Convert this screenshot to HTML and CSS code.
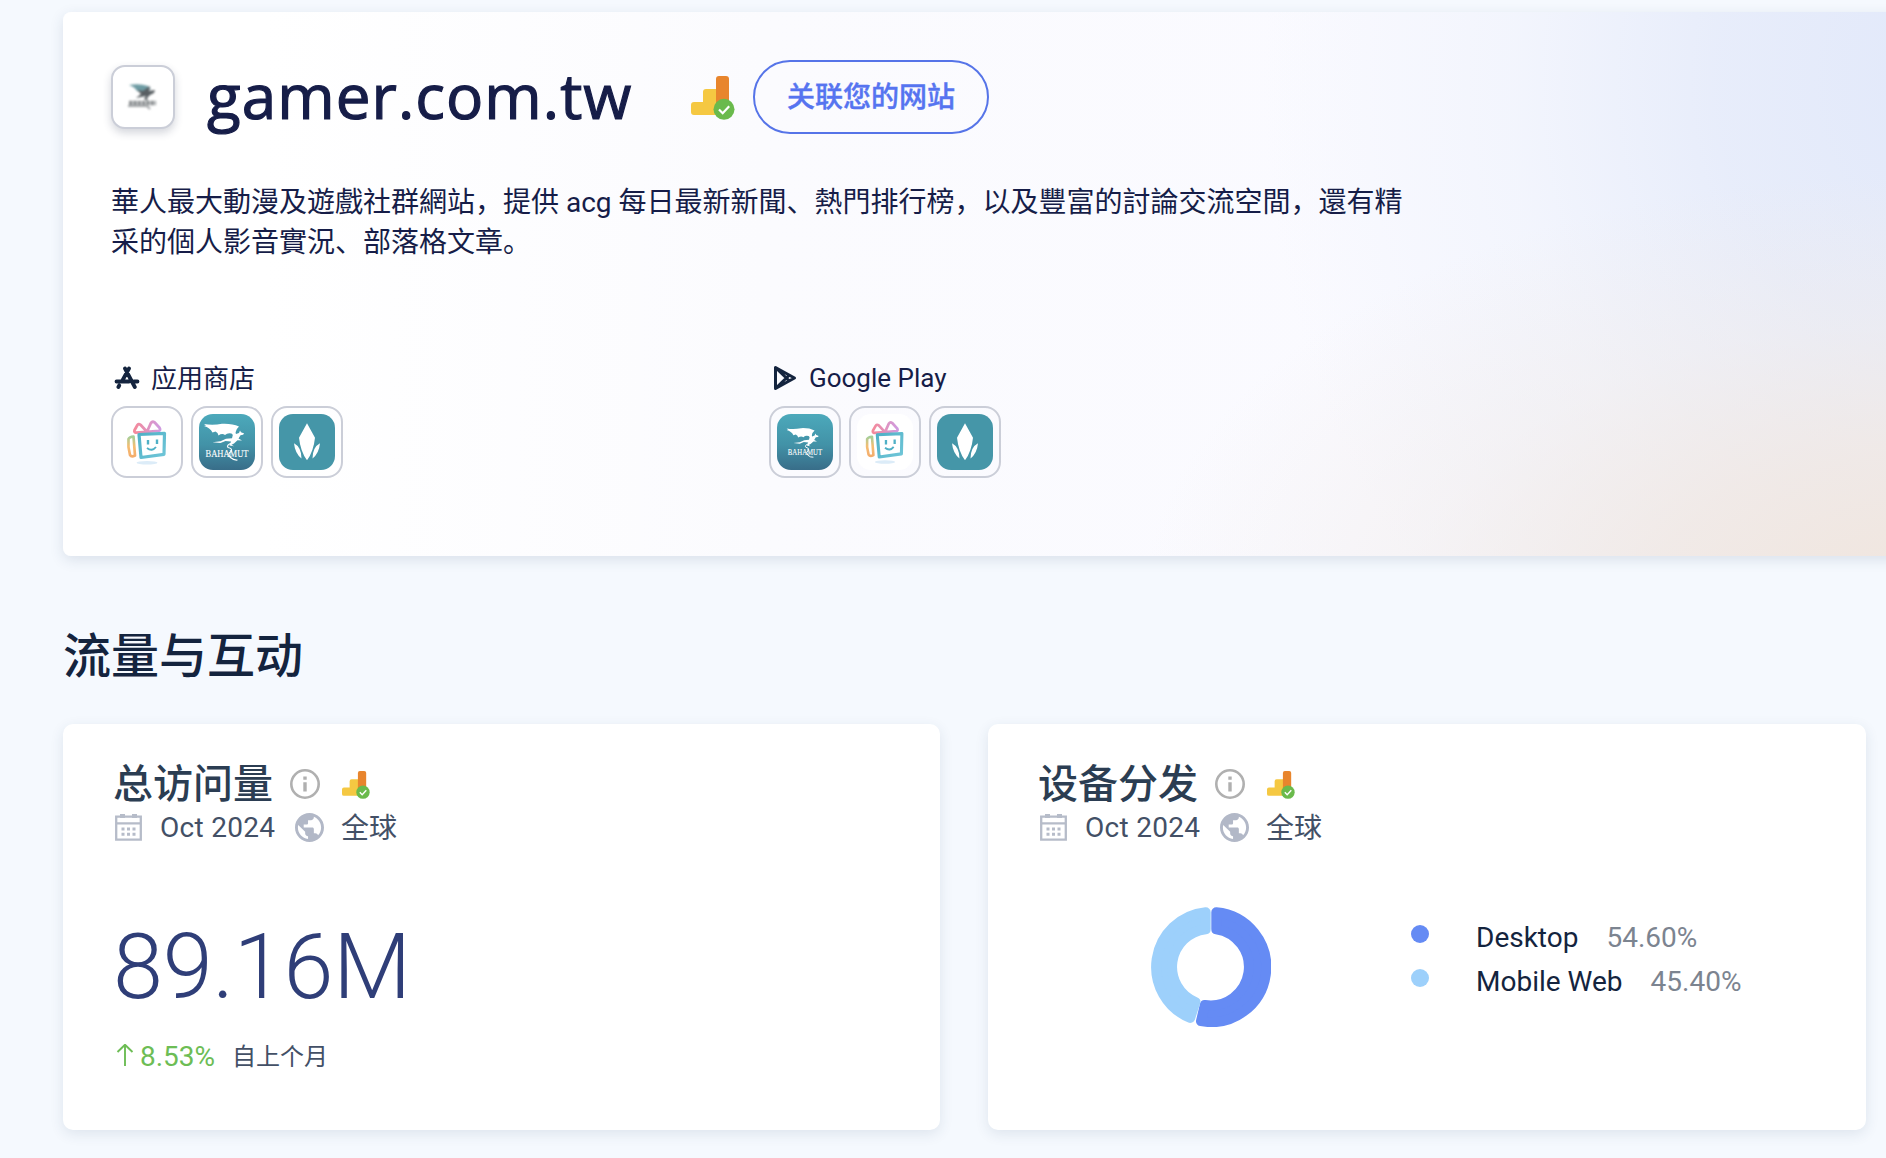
FILE: index.html
```html
<!DOCTYPE html>
<html lang="zh-CN">
<head>
<meta charset="utf-8">
<title>gamer.com.tw</title>
<link rel="stylesheet" href="styles.css">
</head>
<body>
<svg class="defs" width="0" height="0" aria-hidden="true">
  <defs>
    <linearGradient id="bow" x1="0" y1="0" x2="1" y2="0"><stop offset="0" stop-color="#f48a9b"/><stop offset="1" stop-color="#cf9be0"/></linearGradient>
    <linearGradient id="side" x1="0" y1="0" x2="0" y2="1"><stop offset="0" stop-color="#a3cf9a"/><stop offset=".5" stop-color="#f5bd72"/><stop offset="1" stop-color="#f4ad6c"/></linearGradient>
    <linearGradient id="box" x1="0" y1="0" x2="1" y2="1"><stop offset="0" stop-color="#4fb0c6"/><stop offset="1" stop-color="#70c6d8"/></linearGradient>
    <symbol id="ga" viewBox="0 0 44 44">
      <path d="M0 29a3 3 0 0 1 3-3h9V16a3 3 0 0 1 3-3h13v26H3a3 3 0 0 1-3-3z" fill="#f5c842"/>
      <rect x="25" y="0" width="13" height="38" rx="3" fill="#e8852d"/>
      <circle cx="33" cy="33.300" r="10.500" fill="#6aba4c"/>
      <path d="M28 33.500l3.700 3.700 6.500-6.900" fill="none" stroke="#fff" stroke-width="2.200"/>
    </symbol>
    <symbol id="gift" viewBox="0 0 56 56">
      <ellipse cx="28" cy="48.700" rx="10.500" ry="1.800" fill="#dcecf8"/>
      <g fill="none" stroke-linejoin="round">
        <path d="M14.500 22.500q-4 .2-5 2.500-.8 8 1.500 16 1.500 2.500 5 .5z" stroke="url(#side)" stroke-width="2.700"/>
        <path d="M28 17.800l-6.500-7q-2-1.500-3.200.500l-2.800 5q-.5 2 1.200 2.300zM28 17.800l4-9q1.500-2 3.500-.5l5 5.500q1.500 2.500-.8 3z" stroke="url(#bow)" stroke-width="2.800"/>
        <path d="M20 20.500l25.500-1.200-.5 21-23 3.200z" stroke="url(#box)" stroke-width="3.200"/>
        <path d="M28 34q5 4 9-1" stroke="#4fb0c6" stroke-width="1.900"/>
      </g>
      <path d="M29 26v4.500m9-5v4.500" stroke="#4fb0c6" stroke-width="2.400"/>
    </symbol>
    <symbol id="dragon" viewBox="0 0 56 56">
      <path d="M5 10q9 1.500 18-.3 10-.5 17 2.800-3 2.500-3.500 6l-1 4-3-3q-4-1-6.500 1.500-3-2-6.500.5-.5-3-3-4l-3 1q-2.500-5-8.500-6.500l2-.5z" fill="#fff"/>
      <path d="M35 16l2 4 3-1 1-2.500 1 1.800 3.200 1.200-1.200 1.300-2.500.4-2 3.300 3.500 2-4.500-.2-3.500 3.200-2.500 1.300 2.500 1.500-4.500-.7 1.500-4-5.500-.5-5 2-8-.8 8-1 5.500-2.500 6-.5z" fill="#fff"/>
      <path d="M33 29q-6 2-4 4.500 5 1 3 4-4 2.500-.5 6 3.500 3 7 2.500" fill="none" stroke="#fff" stroke-width="1.200"/>
    </symbol>
    <symbol id="leaf" viewBox="0 0 56 56">
      <path d="M28 9.300l8 14.500q-1.500 14-8 22.500-6.500-8.500-8-22.500zM15 29.300q7.500 4 7.500 15.200-6.500-5-7.500-15.200zM41 29.300q-7.500 4-7.500 15.200 6.500-5 7.500-15.200z" fill="#fff"/>
    </symbol>
    <symbol id="info" viewBox="0 0 30 30"><circle cx="15" cy="15" r="13.700" fill="none" stroke="#b0b0b0" stroke-width="2.600"/><path d="M13.300 7.500h3.400v3.200h-3.400zM13.300 13.300h3.400v9.200h-3.400z" fill="#b0b0b0"/></symbol>
    <symbol id="calendar" viewBox="0 0 27 27"><path d="M1.200 2.700h24.600v23H1.200zM1 9.300h25" fill="none" stroke="#b6bcc9" stroke-width="2.300"/><path d="M5 0h5v4H5zM17 0h5v4h-5zM6.500 13.500h3v3h-3zM12 13.500h3v3h-3zM17.500 13.500h3v3h-3zM6.500 18.700h3v3h-3zM12 18.700h3v3h-3zM17.500 18.700h3v3h-3z" fill="#b6bcc9"/></symbol>
    <symbol id="globe" viewBox="2 2 20 20"><path fill="#b2b8c7" d="M12 2C6.480 2 2 6.480 2 12s4.480 10 10 10 10-4.480 10-10S17.520 2 12 2zm-1 17.930c-3.950-.49-7-3.850-7-7.930 0-.62.080-1.210.210-1.790L9 15v1c0 1.100.9 2 2 2v1.930zm6.900-2.540c-.26-.81-1-1.390-1.900-1.390h-1v-3c0-.55-.45-1-1-1H8v-2h2c.55 0 1-.45 1-1V7h2c1.100 0 2-.9 2-2v-.41c2.930 1.190 5 4.060 5 7.410 0 2.080-.8 3.970-2.100 5.390z"/></symbol>
  </defs>
</svg>

<header class="site">
  <div class="site-head">
    <div class="favicon">
      <svg width="32" height="32" viewBox="0 0 32 32"><path d="M2 4q10-2 19 1l3 3-4 2-5 1-5-1q-2-4-8-6z" fill="#6d9ba3"/><path d="M10 9l6 1 7-5-1 5 6-1-1 3-4 2-3 3 1 3-4-2 2-3-5 1-5 1 5-4z" fill="#595f63"/><path d="M2 22h27" stroke="#8b8f91" stroke-width="4.500" stroke-dasharray="3.500 .8"/><path d="M1 25h19l3 3" fill="none" stroke="#a4a7a9" stroke-width="2"/></svg>
    </div>
    <h1>gamer.com.tw</h1>
    <svg class="ga-large"><use href="#ga"/></svg>
    <button class="connect">关联您的网站</button>
  </div>
  <p class="about">華人最大動漫及遊戲社群網站，提供 acg 每日最新新聞、熱門排行榜，以及豐富的討論交流空間，還有精采的個人影音實況、部落格文章。</p>
  <div class="stores">
    <section class="store">
      <h2><svg width="26" height="24" viewBox="0 0 26 24"><g fill="none" stroke="#14243e" stroke-width="3.800" stroke-linecap="round"><path d="M11 2.500l9.800 18.500M15 2.500L8.700 14M2.500 15.500h12.500M20 15.500h3.500M5.200 19.500l-.8 1.500"/></g></svg><span class="cjk">应用商店</span></h2>
      <div class="apps">
        <div class="app"><svg><use href="#gift"/></svg></div>
        <div class="app bahamut"><svg viewBox="0 0 56 56"><use href="#dragon"/><text x="28" y="43" textLength="43" lengthAdjust="spacingAndGlyphs">BAHAMUT</text></svg></div>
        <div class="app leaf"><svg><use href="#leaf"/></svg></div>
      </div>
    </section>
    <section class="store google">
      <h2><svg width="24" height="26" viewBox="0 0 24 26"><path d="M2.500 2.500v21L21.500 13zM3 3l13.500 13M3 23l13.500-13" fill="none" stroke="#14243e" stroke-width="3" stroke-linejoin="round"/></svg><span>Google Play</span></h2>
      <div class="apps">
        <div class="app bahamut"><svg viewBox="-7 -8 70 70"><use href="#dragon" width="56" height="56"/><text x="28" y="43" textLength="43" lengthAdjust="spacingAndGlyphs">BAHAMUT</text></svg></div>
        <div class="app white"><svg viewBox="-1 -1 58 58"><use href="#gift" width="56" height="56"/></svg></div>
        <div class="app leaf"><svg><use href="#leaf"/></svg></div>
      </div>
    </section>
  </div>
</header>

<h2 class="section-title">流量与互动</h2>

<main class="cards">
  <article class="card">
    <h3><span class="title">总访问量</span><svg class="info"><use href="#info"/></svg><svg class="ga-small"><use href="#ga"/></svg></h3>
    <div class="meta"><svg class="cal"><use href="#calendar"/></svg><span class="date">Oct 2024</span><svg class="globe"><use href="#globe"/></svg><span class="region">全球</span></div>
    <div class="total">89.16M</div>
    <div class="change"><svg width="18" height="24" viewBox="0 0 18 24"><path d="M9 22V1M1.500 8L9 .7 16.500 8" fill="none" stroke="#6dbd55" stroke-width="1.900"/></svg><span class="up">8.53%</span><span class="since">自上个月</span></div>
  </article>
  <article class="card">
    <h3><span class="title">设备分发</span><svg class="info"><use href="#info"/></svg><svg class="ga-small"><use href="#ga"/></svg></h3>
    <div class="meta"><svg class="cal"><use href="#calendar"/></svg><span class="date">Oct 2024</span><svg class="globe"><use href="#globe"/></svg><span class="region">全球</span></div>
    <div class="devices">
      <svg class="donut" width="120" height="120" viewBox="-60 -60 120 120">
        <g stroke-width="10" stroke-linejoin="round">
          <path d="M5.300 -54.700A55 55 0 1 1 -10 54.100L-6.200 38A38 38 0 1 0 5.300 -37.800Z" fill="#658bf4" stroke="#658bf4"/>
          <path d="M-5.300 -54.700A55 55 0 0 0 -20.800 50.900L-15.600 35A38 38 0 0 1 -5.300 -37.800Z" fill="#9dd0fb" stroke="#9dd0fb"/>
        </g>
      </svg>
      <ul>
        <li><i class="dot desktop"></i><span class="name">Desktop</span><span class="share">54.60%</span></li>
        <li><i class="dot mobile"></i><span class="name">Mobile Web</span><span class="share">45.40%</span></li>
      </ul>
    </div>
  </article>
</main>
</body>
</html>
```
FILE: styles.css
```css
* { box-sizing: border-box; margin: 0; padding: 0; }
body {
  height: 1158px;
  padding: 12px 0 0 63px;
  overflow: hidden;
  background: #f5f9fe;
  color: #161d48;
  font-family: Roboto, "Noto Sans CJK SC", sans-serif;
}
svg { display: block; flex: none; }
.defs { position: absolute; }

.site {
  width: 1860px;
  height: 544px;
  padding: 48px 48px 0;
  border-radius: 8px;
  background:
    radial-gradient(ellipse 780px 430px at 1860px 590px, rgba(240, 228, 219, .95), rgba(240, 231, 226, .8) 35%, rgba(240, 234, 232, .42) 65%, rgba(246, 244, 246, 0)),
    radial-gradient(ellipse 700px 800px at 1900px 70px, #e1e8fa, rgba(229, 235, 250, .88) 35%, rgba(238, 242, 252, .6) 65%, rgba(250, 250, 254, 0)),
    linear-gradient(90deg, #fff 200px, #fbfbfe 700px, #fafaff 1300px);
  box-shadow: 0 4px 14px rgba(40, 60, 100, .13);
}
.site-head { display: flex; align-items: center; height: 74px; }
.favicon {
  display: grid;
  place-items: center;
  width: 64px;
  height: 64px;
  border: 2px solid #cbced8;
  border-radius: 14px;
  background: #fff;
  box-shadow: 0 4px 8px rgba(40, 50, 80, .2);
}
.favicon svg { filter: blur(.9px); }
h1 {
  width: 516px;
  padding: 0 0 5px 32px;
  font: 400 62px/74px "Open Sans", sans-serif;
  letter-spacing: 1.050px;
  -webkit-text-stroke: 1.200px #161d48;
  white-space: nowrap;
}
.ga-large { width: 44px; height: 44px; margin-top: 2px; }
.connect {
  width: 236px;
  height: 74px;
  margin-left: 18px;
  padding-top: 1px;
  border: 2px solid #5674e8;
  border-radius: 37px;
  background: transparent;
  color: #5674f0;
  font: 500 28px/40px Roboto, "Noto Sans CJK SC", sans-serif;
  -webkit-text-stroke: .4px #5674f0;
}
.about {
  width: 1300px;
  margin-top: 49px;
  font-size: 28px;
  line-height: 40px;
}
.stores { display: flex; margin-top: 95px; }
.store { width: 658px; }
.store h2 {
  display: flex;
  align-items: center;
  gap: 11px;
  height: 40px;
  padding-left: 3px;
  font-size: 26px;
  font-weight: 400;
}
.google h2 { gap: 12px; padding-left: 4px; }
.cjk { padding-bottom: 4px; }
.apps { display: flex; gap: 8px; margin-top: 8px; }
.app {
  width: 72px;
  height: 72px;
  padding: 6px;
  border: 2px solid #cbced8;
  border-radius: 16px;
}
.app svg { width: 56px; height: 56px; border-radius: 14px; }
.app.white svg { background: #fff; }
.bahamut svg { background: linear-gradient(#4ca9bb, #4292a7 55%, #386d89); }
.bahamut text { fill: #fff; stroke: #fff; stroke-width: .1px; font: 9.500px "Liberation Serif", serif; text-anchor: middle; }
.leaf svg { background: #4596a8; }

.section-title {
  margin-top: 65px;
  color: #14243e;
  font-size: 48px;
  font-weight: 500;
  line-height: 72px;
}
.cards { display: grid; grid-template-columns: 877px 878px; gap: 48px; margin-top: 31px; }
.card {
  height: 406px;
  padding: 34px 50px;
  border-radius: 10px;
  background: #fff;
  box-shadow: 0 4px 14px rgba(40, 60, 100, .11);
}
.card h3 {
  display: flex;
  align-items: center;
  height: 50px;
  color: #2b3d52;
  font-size: 40px;
  font-weight: 500;
}
.title { padding-bottom: 5px; }
.info { width: 30px; height: 30px; margin: 2px 0 0 17px; }
.ga-small { width: 28px; height: 28px; margin: 3px 0 0 22px; }
.meta { display: flex; align-items: center; height: 38px; color: #435066; font-size: 28px; }
.cal { width: 27px; height: 27px; margin-left: 2px; }
.date { width: 153px; padding-left: 18px; letter-spacing: .3px; white-space: nowrap; }
.globe { width: 29px; height: 29px; margin-right: 17px; }
.region { padding-bottom: 2px; }
.total { margin-top: 69px; color: #2f3e78; font-size: 90px; font-weight: 300; line-height: 106px; letter-spacing: -.2px; }
.change { display: flex; align-items: center; height: 36px; margin-top: 17px; font-size: 28px; }
.change svg { margin-left: 3px; }
.up { width: 98px; padding-left: 6px; color: #6dbd55; }
.since { padding-bottom: 4px; color: #435066; font-size: 24px; }
.devices { display: flex; padding: 61px 0 0 113px; }
.devices ul { margin: 8px 0 0 140px; list-style: none; }
.devices li { display: flex; align-items: center; height: 44px; font-size: 28px; }
.dot { width: 18px; height: 18px; margin: -6px 47px 0 0; border-radius: 50%; }
.desktop { background: #658bf4; }
.mobile { background: #9dd0fb; }
.name { margin-right: 28px; color: #14243e; }
.share { color: #7c8490; }
```
